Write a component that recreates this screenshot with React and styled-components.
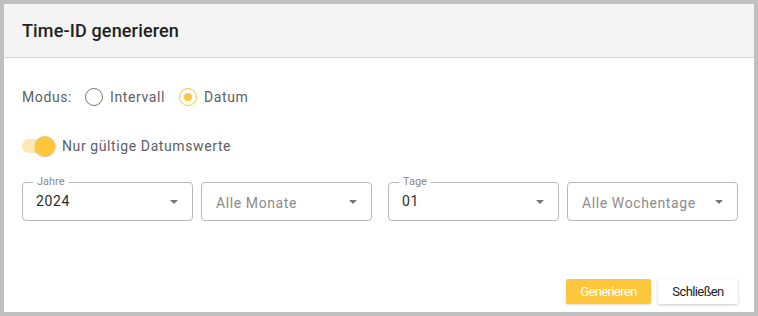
import React, { useState } from "react";
import styled, { createGlobalStyle } from "styled-components";

const GlobalStyle = createGlobalStyle`
  html, body {
    margin: 0;
    padding: 0;
    background: #c0c0c0;
    font-family: Roboto, "Liberation Sans", Arial, sans-serif;
  }
`;

const yellow = "#fdc63d";

const Dialog = styled.div`
  margin: 4px;
  width: 750px;
  height: 308px;
  background: #fff;
  display: flex;
  flex-direction: column;
  box-sizing: border-box;
`;

const Header = styled.div`
  height: 53px;
  background: #f4f4f4;
  border-bottom: 1px solid #d6d6d6;
  display: flex;
  align-items: center;
  padding-left: 18px;
`;

const Title = styled.h2`
  margin: 0;
  font-size: 18px;
  font-weight: 500;
  color: #222;
  letter-spacing: 0.15px;
`;

const Body = styled.div`
  flex: 1;
  display: flex;
  flex-direction: column;
  padding: 27px 16px 8px 18px;
`;

const Row = styled.div`
  display: flex;
  align-items: center;
  height: 24px;
  margin-bottom: ${(p) => p.$mb || 0}px;
  color: #5d6068;
  font-size: 14px;
  letter-spacing: 0.6px;
`;

const ModeLabel = styled.span`
  margin-right: 13px;
`;

const RadioOption = styled.label`
  display: flex;
  align-items: center;
  margin-right: 14px;
  cursor: pointer;
`;

const RadioCircle = styled.span`
  width: 18px;
  height: 18px;
  box-sizing: border-box;
  border-radius: 50%;
  border: 1.5px solid ${(p) => (p.$checked ? yellow : "#7a7a7a")};
  display: flex;
  align-items: center;
  justify-content: center;
  margin-right: 7px;

  &::after {
    content: "";
    width: 8px;
    height: 8px;
    border-radius: 50%;
    background: ${yellow};
    display: ${(p) => (p.$checked ? "block" : "none")};
  }
`;

const SwitchTrack = styled.span`
  position: relative;
  width: 34px;
  height: 14px;
  border-radius: 7px;
  background: #fde8b4;
  margin-right: 6px;
  cursor: pointer;
`;

const SwitchKnob = styled.span`
  position: absolute;
  top: -3px;
  left: ${(p) => (p.$on ? 13 : 0)}px;
  width: 20px;
  height: 20px;
  border-radius: 50%;
  background: ${yellow};
  box-shadow: 0 1px 2px rgba(0, 0, 0, 0.3);
`;

const Fields = styled.div`
  display: flex;
  gap: 16px;
  margin-bottom: 58px;
`;

const FieldGroup = styled.div`
  display: flex;
  gap: 8px;
`;

const Field = styled.div`
  position: relative;
  width: 171px;
  height: 39px;
  box-sizing: border-box;
  border: 1px solid #b9b9b9;
  border-radius: 4px;
  display: flex;
  align-items: center;
  padding: 0 14px 0 13px;
`;

const FieldLabel = styled.span`
  position: absolute;
  top: -7px;
  left: 10px;
  padding: 0 4px;
  background: #fff;
  font-size: 11px;
  line-height: 12px;
  color: #8a8a8a;
`;

const FieldValue = styled.span`
  flex: 1;
  font-size: 14px;
  letter-spacing: 0.6px;
  color: ${(p) => (p.$placeholder ? "#8c8c8c" : "#2c2c2c")};
  margin-top: ${(p) => (p.$placeholder ? 3 : -2)}px;
  padding-left: ${(p) => (p.$placeholder ? 1 : 0)}px;
`;

const Arrow = styled.span`
  width: 0;
  height: 0;
  border-left: 4px solid transparent;
  border-right: 4px solid transparent;
  border-top: 4px solid #777;
  margin-top: 1px;
`;

const Actions = styled.div`
  display: flex;
  justify-content: flex-end;
  gap: 7px;
`;

const Button = styled.button`
  height: 25px;
  width: ${(p) => p.$w}px;
  padding: 0;
  border: none;
  border-radius: 2px;
  font-family: Roboto, "Liberation Sans", Arial, sans-serif;
  font-size: 13px;
  letter-spacing: -0.6px;
  cursor: pointer;
  background: ${(p) => (p.$primary ? yellow : "#fff")};
  color: ${(p) => (p.$primary ? "#fff" : "#222")};
  box-shadow: ${(p) =>
    p.$primary
      ? "0 1px 2px rgba(0,0,0,0.15)"
      : "0 1px 3px rgba(0,0,0,0.22)"};
`;

const SelectField = ({ label, value, placeholder }) => (
  <Field>
    {label && <FieldLabel>{label}</FieldLabel>}
    <FieldValue $placeholder={!value}>{value || placeholder}</FieldValue>
    <Arrow />
  </Field>
);

export default function App() {
  const [mode, setMode] = useState("datum");
  const [validOnly, setValidOnly] = useState(true);

  return (
    <>
      <GlobalStyle />
      <Dialog>
        <Header>
          <Title>Time-ID generieren</Title>
        </Header>
        <Body>
          <Row $mb={25}>
            <ModeLabel>Modus:</ModeLabel>
            <RadioOption onClick={() => setMode("intervall")}>
              <RadioCircle $checked={mode === "intervall"} />
              Intervall
            </RadioOption>
            <RadioOption onClick={() => setMode("datum")}>
              <RadioCircle $checked={mode === "datum"} />
              Datum
            </RadioOption>
          </Row>
          <Row $mb={24}>
            <SwitchTrack onClick={() => setValidOnly(!validOnly)}>
              <SwitchKnob $on={validOnly} />
            </SwitchTrack>
            Nur gültige Datumswerte
          </Row>
          <Fields>
            <FieldGroup>
              <SelectField label="Jahre" value="2024" />
              <SelectField placeholder="Alle Monate" />
            </FieldGroup>
            <FieldGroup>
              <SelectField label="Tage" value="01" />
              <SelectField placeholder="Alle Wochentage" />
            </FieldGroup>
          </Fields>
          <Actions>
            <Button $primary $w={85}>Generieren</Button>
            <Button $w={80}>Schließen</Button>
          </Actions>
        </Body>
      </Dialog>
    </>
  );
}
